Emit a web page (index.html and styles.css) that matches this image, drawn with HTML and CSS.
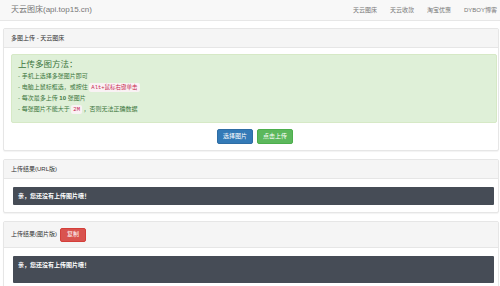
FILE: index.html
```html
<!DOCTYPE html>
<html lang="zh-CN">
<head>
    <meta charset="UTF-8">
    <title>天云图床</title>
    <link rel="stylesheet" href="styles.css">
</head>
<body>
    <nav class="navbar">
        <a class="brand" href="#">天云图床(api.top15.cn)</a>
        <ul class="nav-links">
            <li><a href="#">天云图床</a></li>
            <li><a href="#">天云收款</a></li>
            <li><a href="#">淘宝优惠</a></li>
            <li><a href="#">DYBOY博客</a></li>
        </ul>
    </nav>

    <div class="container">
        <div class="panel">
            <div class="panel-heading">多图上传 - 天云图床</div>
            <div class="panel-body upload-body">
                <div class="alert">
                    <h4>上传多图方法：</h4>
                    <ul>
                        <li>- 手机上选择多张图片即可</li>
                        <li>- 电脑上鼠标框选，或按住 <code>Alt+鼠标右键单击</code></li>
                        <li>- 每次最多上传 <b>10</b> 张图片</li>
                        <li>- 每张图片不能大于 <code>2M</code> ，否则无法正确数据</li>
                    </ul>
                </div>
                <div class="actions">
                    <button class="btn btn-blue">选择图片</button>
                    <button class="btn btn-green">点击上传</button>
                </div>
            </div>
        </div>

        <div class="panel">
            <div class="panel-heading">上传结果(URL版)</div>
            <div class="panel-body result-body">
                <div class="result">亲，您还没有上传图片哦！</div>
            </div>
        </div>

        <div class="panel">
            <div class="panel-heading with-btn">上传结果(图片版) <button class="btn btn-red">复制</button></div>
            <div class="panel-body result-body">
                <div class="result tall">亲，您还没有上传图片哦！</div>
            </div>
        </div>
    </div>
</body>
</html>
```

FILE: styles.css
```css
* { box-sizing: border-box; }

body {
    margin: 0; background: #fff; color: #333;
    font-family: "Liberation Sans", "Noto Sans CJK SC", sans-serif;
    font-size: 6px; line-height: 1.4;
    overflow: hidden;
}

.navbar {
    height: 21px; display: flex; justify-content: space-between; align-items: center;
    padding: 0 3px 0 11px; background: #f8f8f8; border-bottom: 1px solid #e7e7e7;
}
.brand { color: #777; font-size: 8px; text-decoration: none; }
.nav-links { list-style: none; margin: 0; padding: 0; display: flex; gap: 13px; }
.nav-links a { color: #777; text-decoration: none; font-size: 6px; }

.container { padding: 7px 1px 0 3px; display: flex; flex-direction: column; gap: 8px; }

.panel {
    border: 1px solid #e6e6e6; border-radius: 2px; background: #fff;
    box-shadow: 0 1px 1px rgba(0,0,0,0.05);
}
.panel-heading {
    height: 19px; padding: 0 7px; display: flex; align-items: center; gap: 3px;
    background: #f5f5f5; border-bottom: 1px solid #e6e6e6; color: #333;
}
.panel-heading.with-btn { height: 26px; }

.upload-body { padding: 6px 1px 6px 7px; }

.alert {
    background: #dff0d8; border: 1px solid #d6e9c6; border-radius: 2px;
    color: #3c763d; padding: 3px 6px 6px; height: 69px;
}
.alert h4 { margin: 0; font-weight: normal; font-size: 8.5px; line-height: 12px; }
.alert ul { list-style: none; margin: 1px 0 0; padding: 0; }
.alert li { line-height: 11px; }
.alert b { font-family: "Liberation Sans", sans-serif; }

code {
    font-family: "Liberation Mono", "Noto Sans CJK SC", monospace; font-size: 5.5px;
    color: #c7254e; background: #f9f2f4; padding: 1px 2px; border-radius: 2px;
}

.actions { display: flex; justify-content: center; gap: 4px; margin-top: 6px; padding-left: 2px; }

.btn {
    font: inherit; font-size: 6px; color: #fff; border: 1px solid transparent;
    border-radius: 2px; height: 15px; padding: 0 5px; cursor: pointer;
}
.btn-blue { background: #337ab7; border-color: #2e6da4; }
.btn-green { background: #5cb85c; border-color: #4cae4c; }
.btn-red { background: #d9534f; border-color: #d43f3a; height: 14px; padding: 0 6px; }

.result-body { padding: 8px 4px 7px 9px; }
.result {
    background: #464c56; color: #fff; font-weight: bold;
    height: 18px; display: flex; align-items: center; padding: 0 5px;
    border-radius: 1px;
}
.result.tall { height: 27px; align-items: flex-start; padding-top: 5px; }
```
